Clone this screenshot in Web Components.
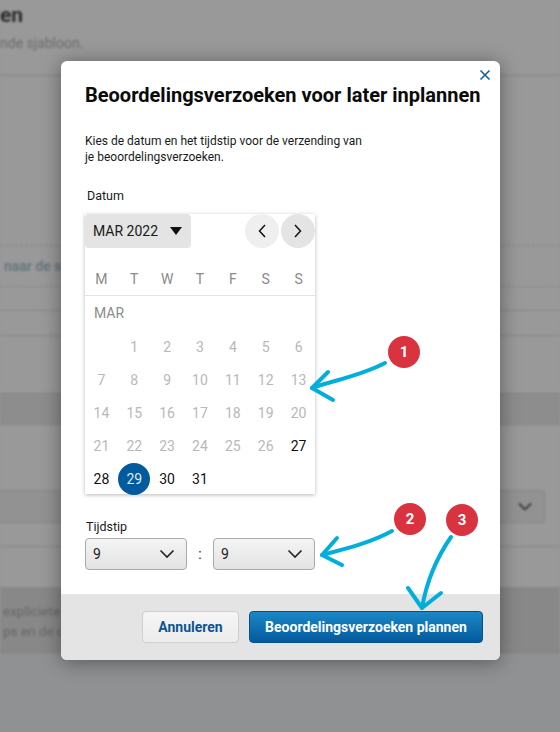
<!DOCTYPE html>
<html lang="en">
<head>
<meta charset="UTF-8">
<title>Beoordelingsverzoeken</title>
<style>
  html, body { margin: 0; height: 732px; overflow: hidden; background: #949596; font-family: Roboto, "Liberation Sans", sans-serif; }
  body { position: relative; }
</style>
</head>
<body>
  <page-behind></page-behind>
  <schedule-modal title-text="Beoordelingsverzoeken voor later inplannen">
    Kies de datum en het tijdstip voor de verzending van<br>je beoordelingsverzoeken.
  </schedule-modal>
  <step-marks></step-marks>

<script>
  // Dimmed page behind the dialog
  class PageBehind extends HTMLElement {
    constructor() {
      super();
      this.attachShadow({ mode: 'open' });
      this.shadowRoot.innerHTML = `
        <style>
          :host { display: block; height: 732px; overflow: hidden; background: #999; filter: blur(.8px); color: #555; font: 14px Roboto, "Liberation Sans", sans-serif; }
          .row { border-bottom: 1px solid #858585; box-sizing: border-box; }
          .head { height: 76px; padding-top: 3px; }
          h2 { margin: 0; font-size: 21px; line-height: 24px; font-weight: 700; color: #2c2c2c; }
          .head p { margin: 8px 0 0; color: #6c6c6c; line-height: 16px; font-size: 14px; }
          .gap { height: 169px; }
          .dash { height: 42px; border-top: 1px dashed #7f8182; border-bottom: 1px dashed #7f8182; box-sizing: border-box; padding: 11px 0 0 4px; font-weight: 700; color: #667780; line-height: 18px; font-size: 14px; }
          .select { height: 33px; margin: 0 15px 0 -5px; border: 1px solid #868686; border-radius: 3px; display: flex; justify-content: flex-end; align-items: center; padding-right: 12px; background: #929292; box-sizing: border-box; }
          .band { height: 66px; background: #888; border-bottom: 1px solid #808080; padding: 14px 0 0 3px; line-height: 20px; color: #666; box-sizing: border-box; font-size: 13.500px; }
          .rest { height: 79px; background: #909192; }
        </style>
        <div class="row head"><h2>en</h2><p>nde sjabloon.</p></div>
        <div class="gap"></div>
        <div class="dash">naar de s</div>
        <div class="row" style="height:24px"></div>
        <div class="row" style="height:25px"></div>
        <div class="row" style="height:58px"></div>
        <div class="row" style="height:31px;background:#8d8d8d"></div>
        <div style="height:65px"></div>
        <div class="select"><svg width="14" height="9" viewBox="0 0 14 9"><path d="M1 1.500l6 6 6-6" fill="none" stroke="#3a3a3a" stroke-width="1.800"/></svg></div>
        <div class="row" style="height:24px"></div>
        <div style="height:40px"></div>
        <div class="band"><div>expliciete t</div><div>ps en de on</div></div>
        <div class="rest"></div>
      `;
    }
  }

  // One date cell
  class CalDay extends HTMLElement {
    constructor() {
      super();
      this.attachShadow({ mode: 'open' });
      this.shadowRoot.innerHTML = `
        <style>
          :host { display: flex; align-items: center; justify-content: center; height: 33px; font-size: 14px; color: #b8b8b8; }
          :host([on]) { color: #111; }
          :host([sel]) { color: #dfeaf3; }
          span { display: flex; width: 32px; height: 32px; align-items: center; justify-content: center; border-radius: 50%; }
          :host([sel]) span { background: #035a9d; }
        </style>
        <span><slot></slot></span>
      `;
    }
  }

  // Month calendar
  class MonthCalendar extends HTMLElement {
    constructor() {
      super();
      this.attachShadow({ mode: 'open' });
      let cells = '<cal-day></cal-day>';
      for (let d = 1; d <= 31; d++) {
        const attr = d === 29 ? 'on sel' : d >= 27 ? 'on' : '';
        cells += `<cal-day ${attr}>${d}</cal-day>`;
      }
      const days = ['M', 'T', 'W', 'T', 'F', 'S', 'S'].map(d => `<span>${d}</span>`).join('');
      this.shadowRoot.innerHTML = `
        <style>
          :host { display: block; width: 230px; height: 280px; background: #fff; box-shadow: 0 1px 4px rgba(0,0,0,.28); font-size: 14px; }
          .top { display: flex; height: 34px; align-items: center; }
          .month { width: 106px; height: 34px; box-sizing: border-box; background: #e4e4e4; border-radius: 4px; display: flex; align-items: center; padding: 0 9px 0 8px; justify-content: space-between; color: #1a1a1a; }
          .nav { width: 34px; height: 34px; border-radius: 50%; display: flex; align-items: center; justify-content: center; background: #efefef; }
          .nav.prev { margin-left: auto; margin-right: 2px; }
          .nav.next { background: #e4e4e4; }
          .days { display: grid; grid-template-columns: repeat(7, 1fr); height: 48px; align-items: end; box-sizing: border-box; border-bottom: 1px solid #e3e3e3; padding-bottom: 8px; color: #8a8a8a; text-align: center; }
          .label { height: 34px; line-height: 35px; padding-left: 9px; color: #8c8c8c; }
          .grid { display: grid; grid-template-columns: repeat(7, 1fr); }
        </style>
        <div class="top">
          <div class="month">MAR 2022 <svg width="12" height="8" viewBox="0 0 12 8"><path d="M0 0h12L6 8z" fill="#111"/></svg></div>
          <div class="nav prev"><svg width="10" height="14" viewBox="0 0 10 14"><path d="M8 1L2.500 7 8 13" fill="none" stroke="#111" stroke-width="1.500"/></svg></div>
          <div class="nav next"><svg width="10" height="14" viewBox="0 0 10 14"><path d="M2 1L7.500 7 2 13" fill="none" stroke="#111" stroke-width="1.500"/></svg></div>
        </div>
        <div class="days">${days}</div>
        <div class="label">MAR</div>
        <div class="grid">${cells}</div>
      `;
    }
  }

  // Grey drop-down box
  class TimeSelect extends HTMLElement {
    constructor() {
      super();
      this.attachShadow({ mode: 'open' });
      this.shadowRoot.innerHTML = `
        <style>
          :host { display: flex; align-items: center; justify-content: space-between; width: 102px; height: 32px; box-sizing: border-box; padding: 0 11px 0 7px; border: 1px solid #aaa; border-radius: 4px; background: linear-gradient(#f4f4f4, #e3e3e3); font-size: 14px; color: #222; }
        </style>
        <slot></slot>
        <svg width="16" height="10" viewBox="0 0 16 10"><path d="M1.500 1.500L8 8l6.500-6.500" fill="none" stroke="#222" stroke-width="1.600"/></svg>
      `;
    }
  }

  // The dialog
  class ScheduleModal extends HTMLElement {
    constructor() {
      super();
      this.attachShadow({ mode: 'open' });
      const title = this.getAttribute('title-text') || '';
      this.shadowRoot.innerHTML = `
        <style>
          :host { position: absolute; left: 61px; top: 61px; width: 439px; height: 599px; background: #fff; border-radius: 6px; box-shadow: 0 2px 20px rgba(0,0,0,.4); display: flex; flex-direction: column; color: #111; font: 12px Roboto, "Liberation Sans", sans-serif; overflow: hidden; }
          .body { flex: 1; padding: 22px 0 0 24px; position: relative; }
          .close { position: absolute; top: 8px; right: 9px; width: 12px; height: 12px; }
          h1 { margin: 0; font-size: 20px; line-height: 24px; font-weight: 700; color: #0b0b0b; white-space: nowrap; }
          p { margin: 26px 0 0; line-height: 16px; font-size: 12px; color: #1a1a1a; }
          .lab { font-size: 12.500px; line-height: 16px; margin: 23px 0 10px 2px; color: #1a1a1a; }
          .lab.t { margin: 25px 0 3px 1px; }
          .time { display: flex; align-items: center; }
          .colon { width: 26px; text-align: center; color: #222; font-size: 14px; }
          .foot { height: 66px; box-sizing: border-box; background: #e4e4e4; display: flex; justify-content: flex-end; align-items: flex-start; padding: 17px 17px 0 0; gap: 10px; }
          .btn { height: 32px; box-sizing: border-box; border-radius: 4px; display: flex; align-items: center; justify-content: center; font-size: 14px; font-weight: 700; }
          .cancel { width: 97px; border: 1px solid #cfcfcf; background: linear-gradient(#f5f5f5, #ececec); color: #0a5596; }
          .go { width: 234px; border: 1px solid #05508d; background: linear-gradient(#1b87c5, #035a9d); color: #fff; }
        </style>
        <div class="body">
          <svg class="close" viewBox="0 0 12 12"><path d="M1.500 1.500l9 9M10.500 1.500l-9 9" stroke="#0a5b9c" stroke-width="1.500" fill="none"/></svg>
          <h1>${title}</h1>
          <p><slot></slot></p>
          <div class="lab">Datum</div>
          <month-calendar></month-calendar>
          <div class="lab t">Tijdstip</div>
          <div class="time">
            <time-select>9</time-select>
            <span class="colon">:</span>
            <time-select>9</time-select>
          </div>
        </div>
        <div class="foot">
          <div class="btn cancel">Annuleren</div>
          <div class="btn go">Beoordelingsverzoeken plannen</div>
        </div>
      `;
    }
  }

  // Hand-drawn arrows and numbered badges on top of the screenshot
  class StepMarks extends HTMLElement {
    constructor() {
      super();
      this.attachShadow({ mode: 'open' });
      const badges = [[404, 352, 1], [410, 519, 2], [462, 520, 3]].map(b =>
        `<div class="badge" style="left:${b[0] - 16}px;top:${b[1] - 16}px">${b[2]}</div>`).join('');
      this.shadowRoot.innerHTML = `
        <style>
          :host { position: absolute; inset: 0; display: block; pointer-events: none; }
          svg { position: absolute; left: 0; top: 0; }
          path { fill: none; stroke: #02afdc; stroke-width: 4; stroke-linecap: round; stroke-linejoin: round; }
          .badge { position: absolute; width: 32px; height: 32px; border-radius: 50%; background: #d9333f; color: #fff; font: 700 15px Roboto, "Liberation Sans", sans-serif; display: flex; align-items: center; justify-content: center; }
        </style>
        <svg width="560" height="732" viewBox="0 0 560 732">
          <path d="M385 363C360 376 335 380 312 388"/>
          <path d="M328 372L312 388L333 400"/>
          <path d="M392 531C370 543 345 549 322 555"/>
          <path d="M337 538L322 555L342 565"/>
          <path d="M451 537C435 560 426 585 422 608"/>
          <path d="M408 588L422 608L441 593"/>
        </svg>
        ${badges}
      `;
    }
  }

  customElements.define('page-behind', PageBehind);
  customElements.define('cal-day', CalDay);
  customElements.define('month-calendar', MonthCalendar);
  customElements.define('time-select', TimeSelect);
  customElements.define('schedule-modal', ScheduleModal);
  customElements.define('step-marks', StepMarks);
</script>
</body>
</html>
